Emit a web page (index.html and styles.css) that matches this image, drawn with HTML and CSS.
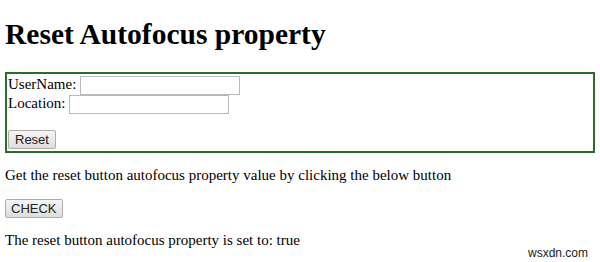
FILE: index.html
```html
<!DOCTYPE html>
<html lang="en">
<head>
    <meta charset="UTF-8">
    <title>Reset Autofocus property</title>
    <link rel="stylesheet" href="styles.css">
</head>
<body>

<h1>Reset Autofocus property</h1>

<form class="reset-form" id="form1">
    UserName: <input type="text" class="field"><br>
    Location: <input type="text" class="field"><br><br>
    <input type="reset" id="RESET1" class="btn" value="Reset" autofocus>
</form>

<p class="note">Get the reset button autofocus property value by clicking the below button</p>

<button class="btn btn-check" onclick="checkFocus()">CHECK</button>

<p class="note" id="Sample">The reset button autofocus property is set to: true</p>

<span class="watermark">wsxdn.com</span>

<script>
    function checkFocus() {
        var af = document.getElementById("RESET1").autofocus;
        document.getElementById("Sample").innerHTML = "The reset button autofocus property is set to: " + af;
    }
</script>

</body>
</html>
```

FILE: styles.css
```css
body {
    font-family: "Liberation Serif", "Times New Roman", serif;
    font-size: 15px;
    margin: 0;
    padding: 0 5px;
    color: #000;
    background: #fff;
}

h1 {
    font-size: 29.5px;
    margin: 18px 0 21px;
}

.reset-form {
    border: 2px solid #2b6b2b;
    padding: 2px 1px 2px;
    line-height: 16px;
}

.field {
    box-sizing: border-box;
    width: 160px;
    height: 19px;
    border: 1px solid #b9b9b9;
    padding: 0 2px;
    margin: 0;
    vertical-align: top;
}

.btn {
    box-sizing: border-box;
    font-family: "Liberation Sans", Arial, sans-serif;
    font-size: 13px;
    color: #222;
    background: linear-gradient(#f6f6f6, #dddddd);
    border: 1px solid #acacac;
    border-radius: 2px;
    height: 19px;
    padding: 0 6px;
    margin: 0;
    vertical-align: top;
    outline: none;
}

.btn-check {
    display: block;
    padding: 0 5px;
}

.note {
    margin: 14px 0 15px;
}

.watermark {
    position: absolute;
    right: 12px;
    top: 246px;
    font-family: "Liberation Sans", Arial, sans-serif;
    font-size: 12px;
    color: #222;
}
```
